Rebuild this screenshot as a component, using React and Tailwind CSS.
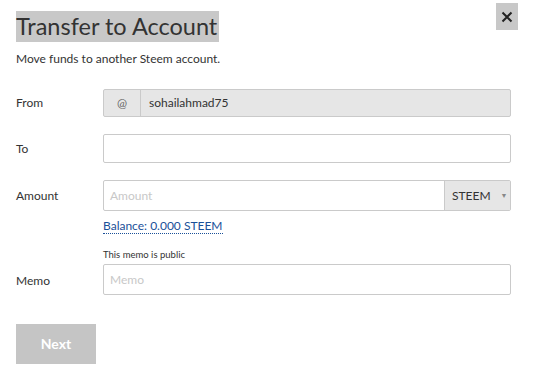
export default function App() {
  return (
    <div className="relative w-[535px] h-[367px] bg-white text-[#333] font-['Lato',sans-serif] overflow-hidden">
      <button className="absolute left-[496px] top-[3px] w-[22px] h-[27px] bg-[#c8c8c8] flex items-center justify-center">
        <svg width="12" height="12" viewBox="0 0 12 12">
          <path d="M1.5 1.5 L10.5 10.5 M10.5 1.5 L1.5 10.5" stroke="#222" strokeWidth="2" />
        </svg>
      </button>

      <div className="pl-4 pr-6 pt-[11px]">
        <h1 className="inline-block bg-[#c8c8c8] text-[23.5px] leading-[31px] pr-[2px] text-[#333]">
          Transfer to Account
        </h1>
        <p className="mt-[9px] text-[12px] leading-[16px] text-[#333]">Move funds to another Steem account.</p>

        <div className="mt-[22px] flex items-center">
          <label className="w-[87px] text-[12px]">From</label>
          <div className="flex-1 h-[28px] flex border border-[#cacaca] bg-[#e6e6e6] rounded-[2px]">
            <span className="w-[37px] flex items-center justify-center border-r border-[#cacaca] text-[12px] text-[#666]">@</span>
            <span className="flex items-center pl-[8px] text-[12px] text-[#333]">sohailahmad75</span>
          </div>
        </div>

        <div className="mt-[17px] flex items-center">
          <label className="w-[87px] text-[12px]">To</label>
          <div className="flex-1 h-[29px] border border-[#cacaca] rounded-[2px] bg-white"></div>
        </div>

        <div className="mt-[17px] flex">
          <label className="w-[87px] text-[12px] pt-[7px]">Amount</label>
          <div className="flex-1">
            <div className="h-[31px] flex border border-[#cacaca] rounded-[2px]">
              <span className="flex-1 flex items-center pl-[6px] text-[12px] text-[#c8c8c8]">Amount</span>
              <span className="w-[66px] flex items-center border-l border-[#cacaca] bg-[#e6e6e6] pl-[7px] text-[12px] text-[#333]">
                STEEM
                <span className="ml-[10px] text-[7px] text-[#888]">▼</span>
              </span>
            </div>
            <div className="mt-[1px]">
              <span className="text-[12px] leading-[15px] text-[#1a5099] border-b border-dotted border-[#1a5099]">Balance: 0.000 STEEM</span>
            </div>
          </div>
        </div>

        <div className="mt-[13px] flex">
          <label className="w-[87px] text-[12px] pt-[23px]">Memo</label>
          <div className="flex-1">
            <p className="text-[9.5px] leading-[12px] text-[#333]">This memo is public</p>
            <div className="mt-[3px] h-[31px] flex items-center border border-[#cacaca] rounded-[2px] pl-[6px] text-[12px] text-[#c8c8c8]">
              Memo
            </div>
          </div>
        </div>

        <button className="mt-[29px] w-[80px] h-[40px] bg-[#c5c5c5] text-white font-bold text-[14px] pb-[2px]">Next</button>
      </div>
    </div>
  );
}
